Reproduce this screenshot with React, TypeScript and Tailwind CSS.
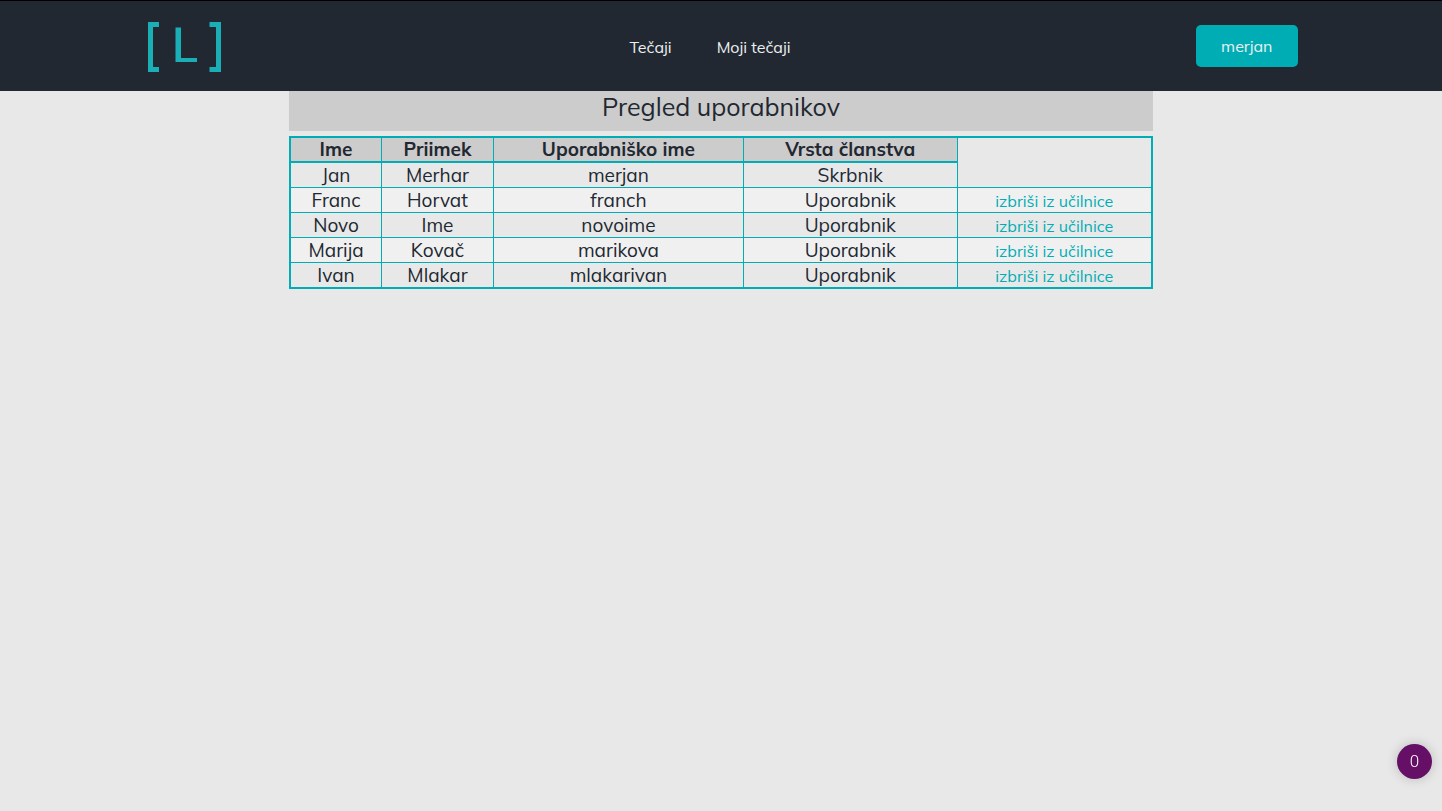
const users = [
  { name: "Jan", surname: "Merhar", username: "merjan", role: "Skrbnik" },
  { name: "Franc", surname: "Horvat", username: "franch", role: "Uporabnik" },
  { name: "Novo", surname: "Ime", username: "novoime", role: "Uporabnik" },
  { name: "Marija", surname: "Kovač", username: "marikova", role: "Uporabnik" },
  { name: "Ivan", surname: "Mlakar", username: "mlakarivan", role: "Uporabnik" },
];

function Logo() {
  return (
    <svg width="80" height="50" viewBox="0 0 80 50" fill="#1aaeb7" aria-hidden="true">
      <path d="M4 0H15V5H9V45H15V50H4Z" />
      <path d="M31.5 5.5H37V36H53V40H31.5Z" />
      <path d="M65.5 0H77V50H65.5V45H72V5H65.5Z" />
    </svg>
  );
}

function Header() {
  return (
    <header className="border-t border-black bg-[#222831]">
      <div className="mx-auto flex h-[90px] w-4/5 items-center justify-between">
        <a href="#" aria-label="Domov" className="pt-0.5">
          <Logo />
        </a>
        <nav className="flex gap-[45px] pt-0.5 text-base text-[#edf0f1]">
          <a href="#tecaji">Tečaji</a>
          <a href="#moji">Moji tečaji</a>
        </nav>
        <button className="h-[42px] w-[102px] rounded-[5px] bg-[#00adb5] text-base text-[#edf0f1]">
          merjan
        </button>
      </div>
    </header>
  );
}

function HeadCell({ children }: { children: string }) {
  return (
    <th className="border border-b-2 border-[#00adb5] bg-[#cccccc] font-bold leading-[23px]">
      {children}
    </th>
  );
}

export default function App() {
  return (
    <div className="min-h-screen bg-[#e8e8e8] font-['Mulish','Lato',sans-serif] text-[#222831]">
      <Header />
      <main className="mx-auto w-[59.9%]">
        <h1 className="mb-[5px] bg-[#cccccc] pb-2 text-center text-[25px] leading-8">
          Pregled uporabnikov
        </h1>
        <table className="w-full table-fixed border-collapse border-2 border-[#00adb5] text-center text-[19px] leading-6">
          <colgroup>
            <col className="w-[10.6%]" />
            <col className="w-[13%]" />
            <col className="w-[29%]" />
            <col className="w-[24.8%]" />
            <col />
          </colgroup>
          <thead>
            <tr>
              <HeadCell>Ime</HeadCell>
              <HeadCell>Priimek</HeadCell>
              <HeadCell>Uporabniško ime</HeadCell>
              <HeadCell>Vrsta članstva</HeadCell>
              <td className="border-l border-[#00adb5]" />
            </tr>
          </thead>
          <tbody>
            {users.map((user, i) => (
              <tr key={user.username} className={i % 2 ? "bg-[#f0f0f0]" : ""}>
                <td className="border border-[#00adb5]">{user.name}</td>
                <td className="border border-[#00adb5]">{user.surname}</td>
                <td className="border border-[#00adb5]">{user.username}</td>
                <td className="border border-[#00adb5]">{user.role}</td>
                <td className={i === 0 ? "border-b border-l border-[#00adb5]" : "border border-[#00adb5]"}>
                  {i > 0 && (
                    <a href="#izbrisi" className="text-base leading-none text-[#00adb5]">
                      izbriši iz učilnice
                    </a>
                  )}
                </td>
              </tr>
            ))}
          </tbody>
        </table>
      </main>
      <button className="fixed right-[10px] bottom-8 size-[35px] rounded-full bg-[#660f66] font-['Roboto',sans-serif] text-[17px] font-light text-white shadow-[0_0_12px_rgba(0,0,0,0.2)]">
        0
      </button>
    </div>
  );
}
